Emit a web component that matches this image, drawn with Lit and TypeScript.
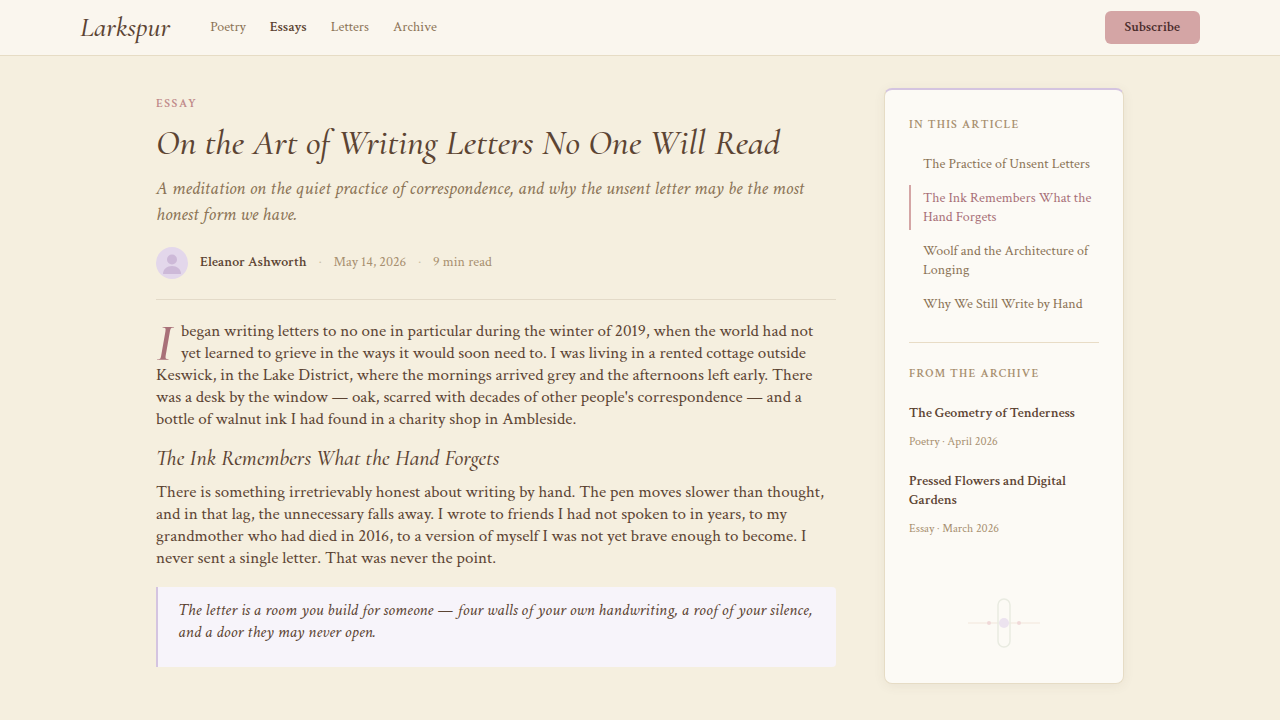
import { LitElement, html, css } from "lit";
import { customElement, state } from "lit/decorators.js";

interface NavItem {
  label: string;
  href: string;
}

interface ArchiveItem {
  title: string;
  meta: string;
}

@customElement("app-root")
export class AppRoot extends LitElement {
  static styles = css`
    :host {
      --display: "Cormorant Garamond", "Liberation Serif", serif;
      display: block;
      min-height: 100vh;
      box-sizing: border-box;
      background: #f5efdf;
      color: #5c4433;
      font-family: "Crimson Text", "Liberation Serif", serif;
      font-size: 17px;
      line-height: 22px;
    }
    * {
      box-sizing: border-box;
    }
    h1,
    h2,
    h3,
    p,
    ul,
    blockquote {
      margin: 0;
      padding: 0;
    }
    ul {
      list-style: none;
    }
    a {
      color: inherit;
      text-decoration: none;
    }
    .top {
      display: flex;
      align-items: center;
      height: 56px;
      padding: 0 80px;
      background: #faf6ee;
      border-bottom: 1px solid #e6dcc5;
    }
    .brand {
      margin-right: 40px;
      padding-bottom: 2px;
      font-family: var(--display);
      font-size: 28px;
      font-weight: 500;
      font-style: italic;
      line-height: 36px;
    }
    .nav {
      display: flex;
      gap: 24px;
      padding-bottom: 2px;
      font-size: 14px;
      line-height: 20px;
      color: #8b7355;
    }
    .nav .current {
      color: #5c4433;
      font-weight: 600;
    }
    .subscribe {
      margin-left: auto;
      padding: 6px 20px;
      border: 0;
      border-radius: 6px;
      background: #d4a5a5;
      color: #4a2c2c;
      font: inherit;
      font-size: 14px;
      font-weight: 600;
      line-height: 21px;
      cursor: pointer;
    }
    .page {
      display: grid;
      grid-template-columns: minmax(0, 680px) 240px;
      gap: 48px;
      justify-content: center;
      padding: 32px 80px 36px;
    }
    .article {
      padding: 6px 0 17px;
    }
    .eyebrow {
      font-size: 12px;
      line-height: 20px;
      font-weight: 600;
      letter-spacing: 0.12em;
      text-transform: uppercase;
      color: #c08a8a;
    }
    .title {
      margin-top: 7px;
      font-family: var(--display);
      font-size: 36px;
      line-height: 44px;
      font-weight: 500;
      font-style: italic;
    }
    .deck {
      margin-top: 11px;
      font-size: 19px;
      line-height: 26px;
      font-style: italic;
      color: #8b7355;
    }
    .byline {
      display: flex;
      align-items: center;
      gap: 12px;
      margin-top: 19px;
      padding-bottom: 20px;
      border-bottom: 1px solid #e3dac8;
      font-size: 14px;
      line-height: 20px;
      color: #a89070;
    }
    .byline span {
      padding-bottom: 2px;
    }
    .avatar {
      display: block;
      width: 32px;
      height: 32px;
    }
    .author {
      color: #5c4433;
      font-weight: 600;
    }
    .dot {
      color: #cdbfa4;
    }
    .lead {
      margin-top: 20px;
    }
    .lead::first-letter {
      float: left;
      padding: 6px 8px 0 0;
      font-family: var(--display);
      font-size: 52px;
      font-weight: 600;
      line-height: 36px;
      font-style: italic;
      color: #a87078;
    }
    .section {
      margin: 13px 0 8px;
      font-family: var(--display);
      font-size: 22px;
      line-height: 30px;
      font-weight: 500;
      font-style: italic;
    }
    .quote {
      margin-top: 18px;
      padding: 12px 20px 24px;
      border-left: 2px solid #d4c4e0;
      border-radius: 0 4px 4px 0;
      background: #f7f4fa;
      font-style: italic;
    }
    .side {
      display: flex;
      flex-direction: column;
      padding: 25px 24px 35px;
      border: 1px solid #e6dcc5;
      border-top: 2px solid #d4c4e0;
      border-radius: 8px;
      background: #fcfaf5;
      box-shadow: 0 2px 12px rgba(92, 68, 51, 0.07);
      font-size: 14px;
      line-height: 19px;
    }
    .label {
      font-size: 12px;
      line-height: 20px;
      font-weight: 600;
      letter-spacing: 0.1em;
      text-transform: uppercase;
      color: #a89070;
    }
    .toc {
      display: flex;
      flex-direction: column;
      gap: 8px;
      margin-top: 16px;
      color: #8b7355;
    }
    .toc a {
      display: block;
      padding: 4px 0 3px 12px;
      border-left: 2px solid transparent;
    }
    .toc a.active {
      color: #a87078;
      border-left-color: #d4a5a5;
    }
    .rule {
      width: 100%;
      height: 1px;
      margin: 25px 0 21px;
      border: 0;
      background: #e8dcc6;
    }
    .archive {
      display: flex;
      flex-direction: column;
      gap: 21px;
      margin-top: 20px;
    }
    .archive a {
      display: block;
      font-weight: 600;
    }
    .archive p {
      margin-top: 9px;
      font-size: 12px;
      color: #a89070;
    }
    .ornament {
      display: block;
      width: 72px;
      height: 50px;
      margin: auto auto 0;
    }
  `;

  @state() private section = "Essays";
  @state() private heading = 1;

  private nav: NavItem[] = ["Poetry", "Essays", "Letters", "Archive"].map(
    (label) => ({ label, href: `#${label.toLowerCase()}` })
  );

  private toc = [
    "The Practice of Unsent Letters",
    "The Ink Remembers What the Hand Forgets",
    "Woolf and the Architecture of Longing",
    "Why We Still Write by Hand",
  ];

  private archive: ArchiveItem[] = [
    { title: "The Geometry of Tenderness", meta: "Poetry · April 2026" },
    { title: "Pressed Flowers and Digital Gardens", meta: "Essay · March 2026" },
  ];

  render() {
    return html`
      <header class="top">
        <a class="brand" href="#home">Larkspur</a>
        <nav class="nav">
          ${this.nav.map(
            (n) => html`<a
              class=${n.label === this.section ? "current" : ""}
              href=${n.href}
              @click=${() => (this.section = n.label)}
              >${n.label}</a
            >`
          )}
        </nav>
        <button class="subscribe" type="button">Subscribe</button>
      </header>
      <main class="page">
        <article class="article">
          <p class="eyebrow">Essay</p>
          <h1 class="title">On the Art of Writing Letters No One Will Read</h1>
          <p class="deck">
            A meditation on the quiet practice of correspondence, and why the
            unsent letter may be the most honest form we have.
          </p>
          <div class="byline">
            <svg class="avatar" viewBox="0 0 32 32" aria-hidden="true">
              <circle cx="16" cy="16" r="16" fill="#e3d7eb" />
              <circle cx="16" cy="12.5" r="5" fill="#cdb9d8" />
              <path d="M7 27c0-5 4-8 9-8s9 3 9 8z" fill="#cdb9d8" />
            </svg>
            <span class="author">Eleanor Ashworth</span>
            <span class="dot">·</span>
            <span>May 14, 2026</span>
            <span class="dot">·</span>
            <span>9 min read</span>
          </div>
          <p class="lead">I began writing letters to no one in particular during the winter of
            2019, when the world had not yet learned to grieve in the ways it
            would soon need to. I was living in a rented cottage outside
            Keswick, in the Lake District, where the mornings arrived grey and
            the afternoons left early. There was a desk by the window — oak,
            scarred with decades of other people's correspondence — and a
            bottle of walnut ink I had found in a charity shop in Ambleside.</p>
          <h2 class="section">The Ink Remembers What the Hand Forgets</h2>
          <p>
            There is something irretrievably honest about writing by hand. The
            pen moves slower than thought, and in that lag, the unnecessary
            falls away. I wrote to friends I had not spoken to in years, to my
            grandmother who had died in 2016, to a version of myself I was not
            yet brave enough to become. I never sent a single letter. That was
            never the point.
          </p>
          <blockquote class="quote">
            The letter is a room you build for someone — four walls of your own
            handwriting, a roof of your silence, and a door they may never open.
          </blockquote>
        </article>
        <aside class="side">
          <h3 class="label">In this article</h3>
          <ul class="toc">
            ${this.toc.map(
              (t, i) => html`<li>
                <a
                  class=${i === this.heading ? "active" : ""}
                  href="#part-${i + 1}"
                  @click=${() => (this.heading = i)}
                  >${t}</a
                >
              </li>`
            )}
          </ul>
          <hr class="rule" />
          <h3 class="label">From the archive</h3>
          <ul class="archive">
            ${this.archive.map(
              (a) => html`<li>
                <a href="#archive">${a.title}</a>
                <p>${a.meta}</p>
              </li>`
            )}
          </ul>
          <svg class="ornament" viewBox="0 0 72 50" aria-hidden="true">
            <path d="M0 25h72" stroke="#f7f0e8" stroke-width="2" />
            <rect x="30" y="1" width="12" height="48" rx="6" fill="none" stroke="#e9ebe1" stroke-width="1.5" />
            <circle cx="36" cy="25" r="5" fill="#ece3ef" />
            <circle cx="21" cy="25" r="2" fill="#f0d8d8" />
            <circle cx="51" cy="25" r="2" fill="#f0d8d8" />
          </svg>
        </aside>
      </main>
    `;
  }
}
